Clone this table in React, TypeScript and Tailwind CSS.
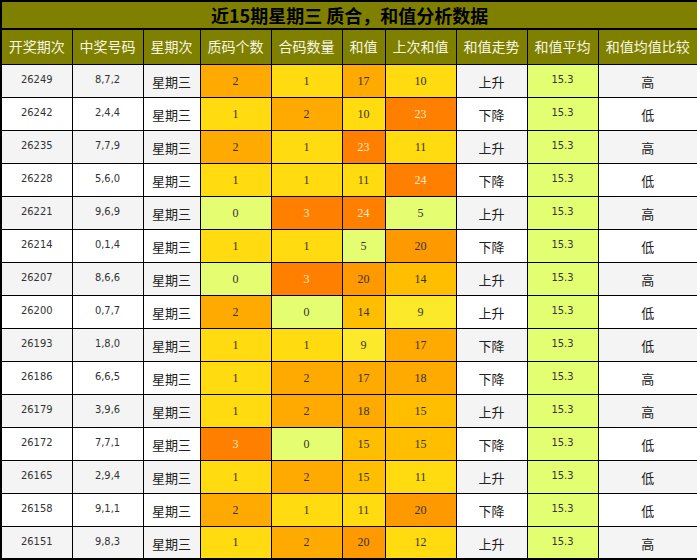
import React from "react";

type Row = {
  issue: string;
  nums: string;
  prime: number;
  composite: number;
  sum: number;
  lastSum: number;
  trend: "上升" | "下降";
  cmp: "高" | "低";
};

const ROWS: Row[] = [
  { issue: "26249", nums: "8,7,2", prime: 2, composite: 1, sum: 17, lastSum: 10, trend: "上升", cmp: "高" },
  { issue: "26242", nums: "2,4,4", prime: 1, composite: 2, sum: 10, lastSum: 23, trend: "下降", cmp: "低" },
  { issue: "26235", nums: "7,7,9", prime: 2, composite: 1, sum: 23, lastSum: 11, trend: "上升", cmp: "高" },
  { issue: "26228", nums: "5,6,0", prime: 1, composite: 1, sum: 11, lastSum: 24, trend: "下降", cmp: "低" },
  { issue: "26221", nums: "9,6,9", prime: 0, composite: 3, sum: 24, lastSum: 5, trend: "上升", cmp: "高" },
  { issue: "26214", nums: "0,1,4", prime: 1, composite: 1, sum: 5, lastSum: 20, trend: "下降", cmp: "低" },
  { issue: "26207", nums: "8,6,6", prime: 0, composite: 3, sum: 20, lastSum: 14, trend: "上升", cmp: "高" },
  { issue: "26200", nums: "0,7,7", prime: 2, composite: 0, sum: 14, lastSum: 9, trend: "上升", cmp: "低" },
  { issue: "26193", nums: "1,8,0", prime: 1, composite: 1, sum: 9, lastSum: 17, trend: "下降", cmp: "低" },
  { issue: "26186", nums: "6,6,5", prime: 1, composite: 2, sum: 17, lastSum: 18, trend: "下降", cmp: "高" },
  { issue: "26179", nums: "3,9,6", prime: 1, composite: 2, sum: 18, lastSum: 15, trend: "上升", cmp: "高" },
  { issue: "26172", nums: "7,7,1", prime: 3, composite: 0, sum: 15, lastSum: 15, trend: "下降", cmp: "低" },
  { issue: "26165", nums: "2,9,4", prime: 1, composite: 2, sum: 15, lastSum: 11, trend: "上升", cmp: "低" },
  { issue: "26158", nums: "9,1,1", prime: 2, composite: 1, sum: 11, lastSum: 20, trend: "下降", cmp: "低" },
  { issue: "26151", nums: "9,8,3", prime: 1, composite: 2, sum: 20, lastSum: 12, trend: "上升", cmp: "高" },
];

const HEADERS = ["开奖期次", "中奖号码", "星期次", "质码个数", "合码数量", "和值", "上次和值", "和值走势", "和值平均", "和值均值比较"];
const WIDTHS = ["w-[71px]", "w-[71px]", "w-[57px]", "w-[71px]", "w-[71px]", "w-[43px]", "w-[71px]", "w-[71px]", "w-[71px]", "w-[100px]"];

const countClass = (n: number) =>
  n === 0
    ? "bg-[#e5fd70] text-[#333]"
    : n === 1
      ? "bg-[#ffdb10] text-[#333]"
      : n === 2
        ? "bg-[#ffaa00] text-[#333]"
        : "bg-[#ff8000] text-[#fde8cc]";

const sumClass = (s: number) => {
  if (s <= 6) return "bg-[#e5fd70] text-[#333]";
  if (s <= 9) return "bg-[#fbe92a] text-[#333]";
  if (s <= 12) return "bg-[#ffdb10] text-[#333]";
  if (s <= 15) return "bg-[#ffbf00] text-[#333]";
  if (s <= 18) return "bg-[#ffaa00] text-[#333]";
  if (s <= 21) return "bg-[#ff9900] text-[#333]";
  return "bg-[#ff8000] text-[#fde8cc]";
};

const SANS = "font-['DejaVu_Sans_Condensed','DejaVu_Sans','Noto_Sans_CJK_SC',sans-serif]";
const SERIF = "font-['Liberation_Serif','Noto_Sans_CJK_SC',serif]";
const CJK = "font-['Noto_Sans_CJK_SC',sans-serif]";

export default function App() {
  return (
    <div className="w-[697px] bg-white">
      <table className="w-[697px] table-fixed border-collapse border-2 border-black text-center">
        <colgroup>
          {WIDTHS.map((w, i) => (
            <col key={i} className={w} />
          ))}
        </colgroup>
        <thead>
          <tr className="h-[28px]">
            <th
              colSpan={10}
              className={`border-2 border-black bg-[#808000] p-0 text-[18px] leading-none font-bold text-black ${CJK}`}
            >
              近15期星期三 质合，和值分析数据
            </th>
          </tr>
          <tr className="h-[35px]">
            {HEADERS.map((h) => (
              <th
                key={h}
                className={`border border-black bg-[#808000] p-0 text-[14px] font-normal text-[#f7f7e6] ${CJK}`}
              >
                {h}
              </th>
            ))}
          </tr>
        </thead>
        <tbody>
          {ROWS.map((r, i) => {
            const rowBg = i % 2 === 0 ? "bg-[#f4f4f4]" : "bg-white";
            return (
              <tr key={r.issue} className="h-[33px]">
                <td className={`border border-black p-0 ${rowBg} text-[11px] text-[#333] ${SANS}`}>{r.issue}</td>
                <td className={`border border-black p-0 ${rowBg} text-[11px] text-[#333] ${SANS}`}>{r.nums}</td>
                <td className={`border border-black p-0 pt-[2px] ${rowBg} text-[13px] text-[#222] ${CJK}`}>星期三</td>
                <td className={`border border-black p-0 text-[12px] ${SERIF} ${countClass(r.prime)}`}>{r.prime}</td>
                <td className={`border border-black p-0 text-[12px] ${SERIF} ${countClass(r.composite)}`}>{r.composite}</td>
                <td className={`border border-black p-0 text-[12px] ${SERIF} ${sumClass(r.sum)}`}>{r.sum}</td>
                <td className={`border border-black p-0 text-[12px] ${SERIF} ${sumClass(r.lastSum)}`}>{r.lastSum}</td>
                <td className={`border border-black p-0 pt-[2px] ${rowBg} text-[13px] text-[#222] ${CJK}`}>{r.trend}</td>
                <td className={`border border-black p-0 bg-[#e4fe72] text-[11px] text-[#333] ${SANS}`}>15.3</td>
                <td className={`border border-black p-0 pt-[2px] ${rowBg} text-[13px] text-[#222] ${CJK}`}>{r.cmp}</td>
              </tr>
            );
          })}
        </tbody>
      </table>
    </div>
  );
}
